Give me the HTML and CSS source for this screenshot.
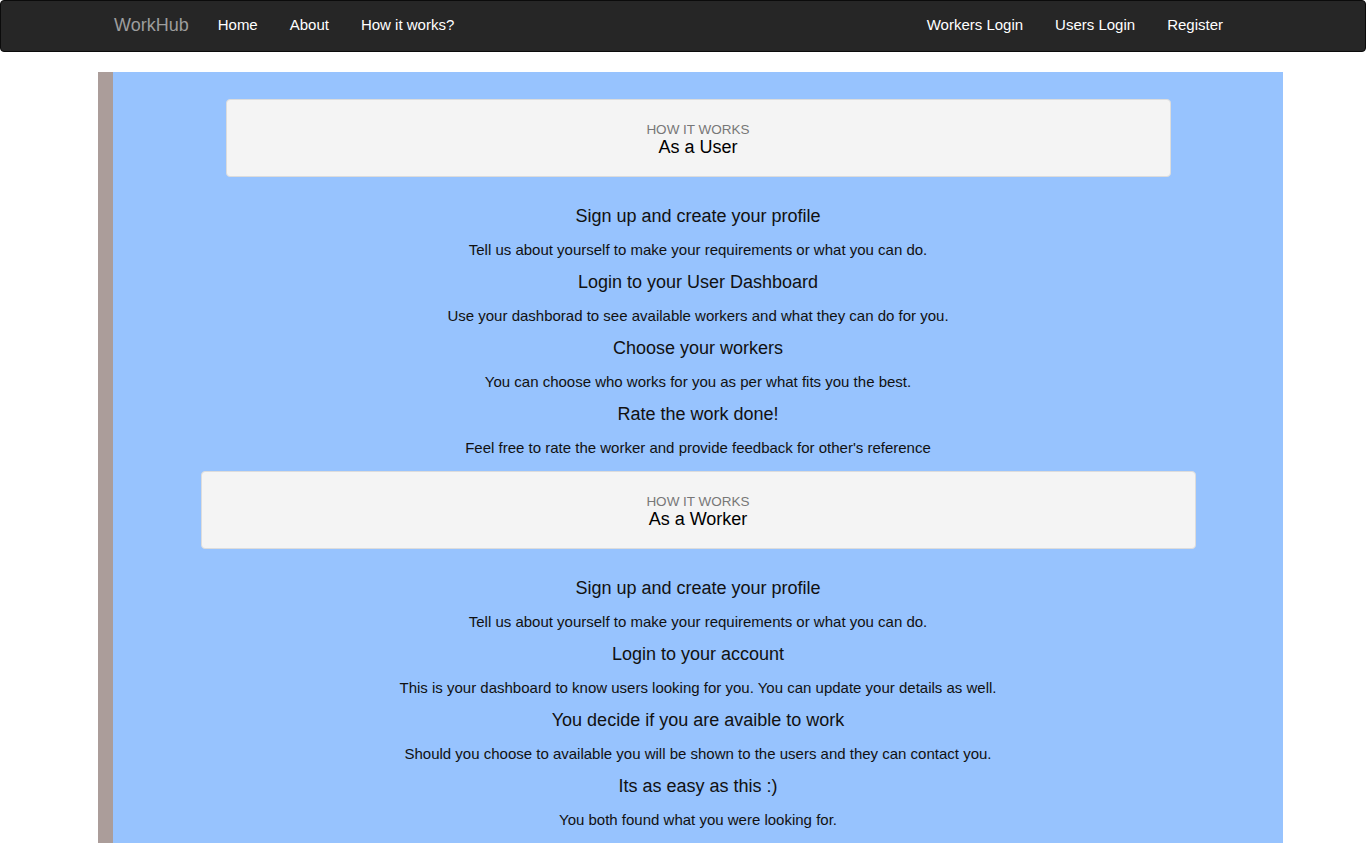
FILE: index.html
```html
<!DOCTYPE html>
<html lang="en">
<head>
<meta charset="utf-8">
<title>WorkHub - How it works</title>
<link rel="stylesheet" href="styles.css">
</head>
<body>
<nav class="navbar">
  <div class="nav-inner">
    <a class="brand" href="#">WorkHub</a>
    <ul class="nav-links">
      <li><a href="#">Home</a></li>
      <li><a href="#">About</a></li>
      <li><a href="#">How it works?</a></li>
    </ul>
    <ul class="nav-links nav-right">
      <li><a href="#">Workers Login</a></li>
      <li><a href="#">Users Login</a></li>
      <li><a href="#">Register</a></li>
    </ul>
  </div>
</nav>

<main class="page">
  <div class="intro-box box-user">
    <div class="intro-label">HOW IT WORKS</div>
    <div class="intro-title">As a User</div>
  </div>
  <h4 class="step-title">Sign up and create your profile</h4>
  <p class="step-text">Tell us about yourself to make your requirements or what you can do.</p>
  <h4 class="step-title">Login to your User Dashboard</h4>
  <p class="step-text">Use your dashborad to see available workers and what they can do for you.</p>
  <h4 class="step-title">Choose your workers</h4>
  <p class="step-text">You can choose who works for you as per what fits you the best.</p>
  <h4 class="step-title">Rate the work done!</h4>
  <p class="step-text">Feel free to rate the worker and provide feedback for other's reference</p>

  <div class="intro-box box-worker">
    <div class="intro-label">HOW IT WORKS</div>
    <div class="intro-title">As a Worker</div>
  </div>
  <h4 class="step-title">Sign up and create your profile</h4>
  <p class="step-text">Tell us about yourself to make your requirements or what you can do.</p>
  <h4 class="step-title">Login to your account</h4>
  <p class="step-text">This is your dashboard to know users looking for you. You can update your details as well.</p>
  <h4 class="step-title">You decide if you are avaible to work</h4>
  <p class="step-text">Should you choose to available you will be shown to the users and they can contact you.</p>
  <h4 class="step-title">Its as easy as this :)</h4>
  <p class="step-text">You both found what you were looking for.</p>
</main>
</body>
</html>
```

FILE: styles.css
```css
html, body {
  margin: 0;
  padding: 0;
}

body {
  font-family: "Liberation Sans", Arial, Helvetica, sans-serif;
  font-size: 15px;
  line-height: 20px;
  color: #111;
  background: #fff;
}

a {
  text-decoration: none;
}

.navbar {
  height: 50px;
  background: #262626;
  border: 1px solid #0b0b0b;
  border-radius: 4px;
}

.nav-inner {
  display: flex;
  align-items: center;
  height: 50px;
  padding-left: 99px;
}

.brand {
  font-size: 18px;
  line-height: 20px;
  color: #9d9d9d;
  padding: 14px 13px 16px 14px;
}

.nav-links {
  list-style: none;
  margin: 0;
  padding: 0;
  display: flex;
}

.nav-links a {
  display: block;
  padding: 14px 16px 16px;
  color: #fff;
  font-size: 15px;
  line-height: 20px;
}

.nav-right {
  margin-left: auto;
  margin-right: 126px;
}

.page {
  width: 1185px;
  box-sizing: border-box;
  margin: 20px 0 0 98px;
  border-left: 15px solid #ab9d9a;
  background: #97c3fe;
  padding-top: 27px;
  padding-bottom: 12px;
  min-height: 800px;
  text-align: center;
}

.intro-box {
  box-sizing: border-box;
  height: 78px;
  margin: 13px auto 29px;
  padding: 22px 15px 19px;
  background: #f4f4f4;
  border: 1px solid #dcdcdc;
  border-radius: 4px;
}

.page > .intro-box:first-child {
  margin-top: 0;
}

.box-user {
  width: 945px;
}

.box-worker {
  width: 995px;
}

.intro-label {
  font-size: 13.5px;
  line-height: 15px;
  color: #777;
}

.intro-title {
  font-size: 18px;
  line-height: 20px;
  color: #000;
}

.step-title {
  font-size: 18px;
  font-weight: normal;
  line-height: 20px;
  margin: 0 0 14px;
  color: #111;
}

.step-text {
  margin: 0 0 12px;
  font-size: 15px;
  line-height: 20px;
  color: #111;
}
```
